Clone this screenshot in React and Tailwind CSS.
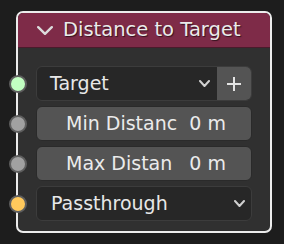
import React from "react";

const Chevron = ({ className = "", color = "#d8d8d8", w = 12, h = 7, sw = 2 }) => (
  <svg width={w} height={h} viewBox={`0 0 ${w} ${h}`} className={className}>
    <polyline
      points={`${sw / 2},${sw / 2} ${w / 2},${h - sw / 2} ${w - sw / 2},${sw / 2}`}
      fill="none"
      stroke={color}
      strokeWidth={sw}
      strokeLinecap="round"
      strokeLinejoin="round"
    />
  </svg>
);

const Socket = ({ color }) => (
  <div
    className="absolute left-[-28px] top-1/2 -translate-y-1/2 w-[18px] h-[18px] rounded-full border-[2px] border-[#5e5e5e]"
    style={{ backgroundColor: color }}
  />
);

export default function App() {
  return (
    <div
      className="w-[284px] h-[244px] bg-[#1d1d1d] pt-[11px] pl-[16px]"
      style={{ fontFamily: '"DejaVu Sans", sans-serif' }}
    >
      <div className="w-[256px] h-[222px] border-2 border-[#ececec] rounded-[7px] bg-[#303030] flex flex-col overflow-visible">
        <div className="h-[35px] bg-[#7e2b48] rounded-t-[5px] border-b border-[#4a1a2b] flex items-center pl-[19px] shrink-0">
          <Chevron w={16} h={9} sw={2.4} color="#dcdcdc" />
          <span
            className="ml-[10px] text-[19.5px] leading-none text-[#ebebeb] -mt-[1px]"
            style={{ textShadow: "1px 1px 1px rgba(0,0,0,0.6)" }}
          >
            Distance to Target
          </span>
        </div>
        <div className="flex flex-col gap-[5px] px-[18px] pt-[18px]">
          {/* Target row */}
          <div className="relative h-[35px] flex rounded-[6px] border border-[#3c3c3c] bg-[#272727]">
            <Socket color="#c2ffc2" />
            <div className="flex-1 flex items-center pl-[13px] pr-[7px] text-[19px] text-[#e8e8e8]">
              <span className="flex-1">Target</span>
              <Chevron w={11} h={7} sw={2} color="#d0d0d0" />
            </div>
            <div className="w-[34px] bg-[#545454] rounded-r-[5px] flex items-center justify-center">
              <svg width="16" height="16" viewBox="0 0 16 16">
                <path d="M8 1v14M1 8h14" stroke="#e4e4e4" strokeWidth="2" />
              </svg>
            </div>
          </div>
          {/* Min Distance */}
          <div className="relative h-[35px] flex items-center justify-between pl-[29px] pr-[25px] rounded-[6px] border border-[#2a2a2a] bg-[#545454] text-[19px] text-[#ebebeb]">
            <Socket color="#a1a1a1" />
            <span>Min Distanc</span>
            <span>0 m</span>
          </div>
          {/* Max Distance */}
          <div className="relative h-[35px] flex items-center justify-between pl-[29px] pr-[25px] rounded-[6px] border border-[#2a2a2a] bg-[#545454] text-[19px] text-[#ebebeb]">
            <Socket color="#a1a1a1" />
            <span>Max Distan</span>
            <span>0 m</span>
          </div>
          {/* Passthrough */}
          <div className="relative h-[35px] flex items-center pl-[14px] pr-[6px] rounded-[6px] border border-[#3c3c3c] bg-[#272727] text-[19px] text-[#e8e8e8]">
            <Socket color="#ffc95c" />
            <span className="flex-1">Passthrough</span>
            <Chevron w={11} h={7} sw={2} color="#d0d0d0" />
          </div>
        </div>
      </div>
    </div>
  );
}
